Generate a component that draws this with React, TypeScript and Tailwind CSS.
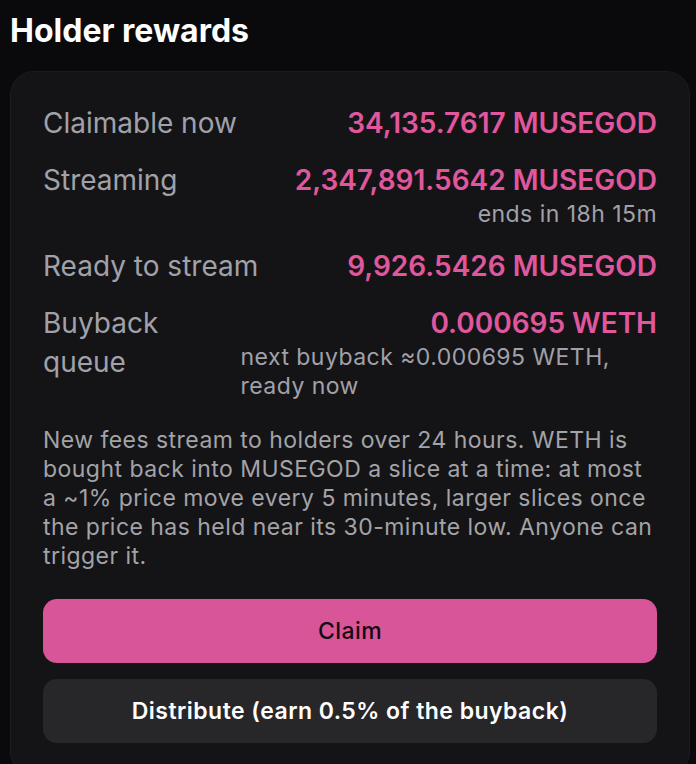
export default function App() {
  const rows = [
    { label: "Claimable now", value: "34,135.7617 MUSEGOD" },
    { label: "Streaming", value: "2,347,891.5642 MUSEGOD", sub: "ends in 18h 15m" },
    { label: "Ready to stream", value: "9,926.5426 MUSEGOD" },
    { label: "Buyback queue", value: "0.000695 WETH", sub: "next buyback ≈0.000695 WETH, ready now" },
  ]

  return (
    <main className="min-h-screen bg-[#0a0a0c] pt-[11px] pl-[10px] pr-[6px] pb-[10px] font-['Inter',sans-serif] antialiased">
      <h2 className="text-[32px] font-bold leading-[40px] text-white mb-[20px]">Holder rewards</h2>

      <section className="rounded-[24px] bg-[#141416] border border-[#1c1c1f] p-8">
        <div className="flex flex-col gap-[18px]">
          {rows.map((row) => (
            <div key={row.label} className="flex items-start justify-between gap-6">
              <div className="text-[28px] leading-[39px] text-[#a1a1aa]">{row.label}</div>
              <div className="flex flex-col items-end">
                <div className="text-[28px] font-semibold leading-[39px] text-[#e0579d]">{row.value}</div>
                {row.sub && (
                  <div className="text-[23px] leading-[29px] tracking-[0.02em] text-[#a1a1aa]">{row.sub}</div>
                )}
              </div>
            </div>
          ))}
        </div>

        <p className="mt-[25px] text-[23px] leading-[29px] tracking-[0.02em] text-[#a3a3a8]">
          New fees stream to holders over 24 hours. WETH is bought back into MUSEGOD a slice at a time: at most a
          ~1% price move every 5 minutes, larger slices once the price has held near its 30-minute low. Anyone can
          trigger it.
        </p>

        <div className="mt-[28px] flex flex-col gap-4">
          <button className="h-16 rounded-[14px] bg-[#d9559a] text-[23px] font-medium tracking-[0.02em] text-[#140810]">
            Claim
          </button>
          <button className="h-16 rounded-[14px] bg-[#27272a] text-[23px] font-semibold tracking-[0.02em] text-white">
            Distribute (earn 0.5% of the buyback)
          </button>
        </div>
      </section>
    </main>
  )
}
